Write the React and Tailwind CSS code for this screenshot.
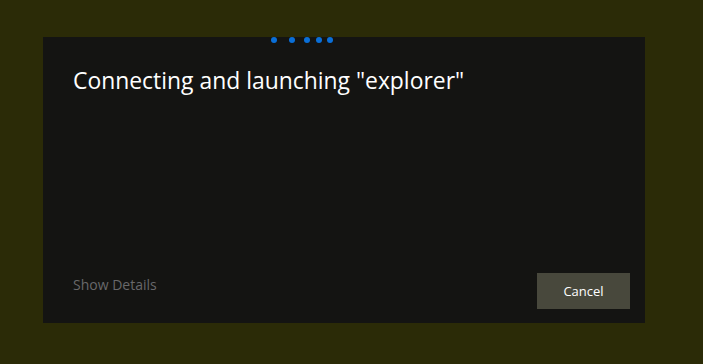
import React from 'react';

const dots = [228, 246, 261, 273, 284];

const App = () => {
    return (
        <div className="w-[703px] h-[364px] bg-[#2b2b07] pl-[43px] pt-[37px]" style={{ fontFamily: '"Open Sans", "Noto Sans", sans-serif' }}>
            <div className="relative w-[602px] h-[286px] bg-[#141412] flex flex-col px-[30px]">
                <div className="absolute top-0 left-0 w-full h-[7px]">
                    {dots.map(x => <span key={x} className="absolute top-[0px] w-[6px] h-[6px] rounded-full bg-[#0a6fd8]" style={{ left: x }} />)}
                </div>
                <h1 className="mt-[29px] text-[22.9px] leading-[30px] text-white">Connecting and launching "explorer"</h1>
                <div className="mt-auto mb-[14px] flex items-end justify-between">
                    <span className="mb-[14px] text-[14px] leading-[20px] text-[#68686a]">Show Details</span>
                    <button className="w-[93px] h-[36px] -mr-[15px] pt-[2px] bg-[#48483c] text-white text-[13px]">Cancel</button>
                </div>
            </div>
        </div>
    );
};

export default App;
